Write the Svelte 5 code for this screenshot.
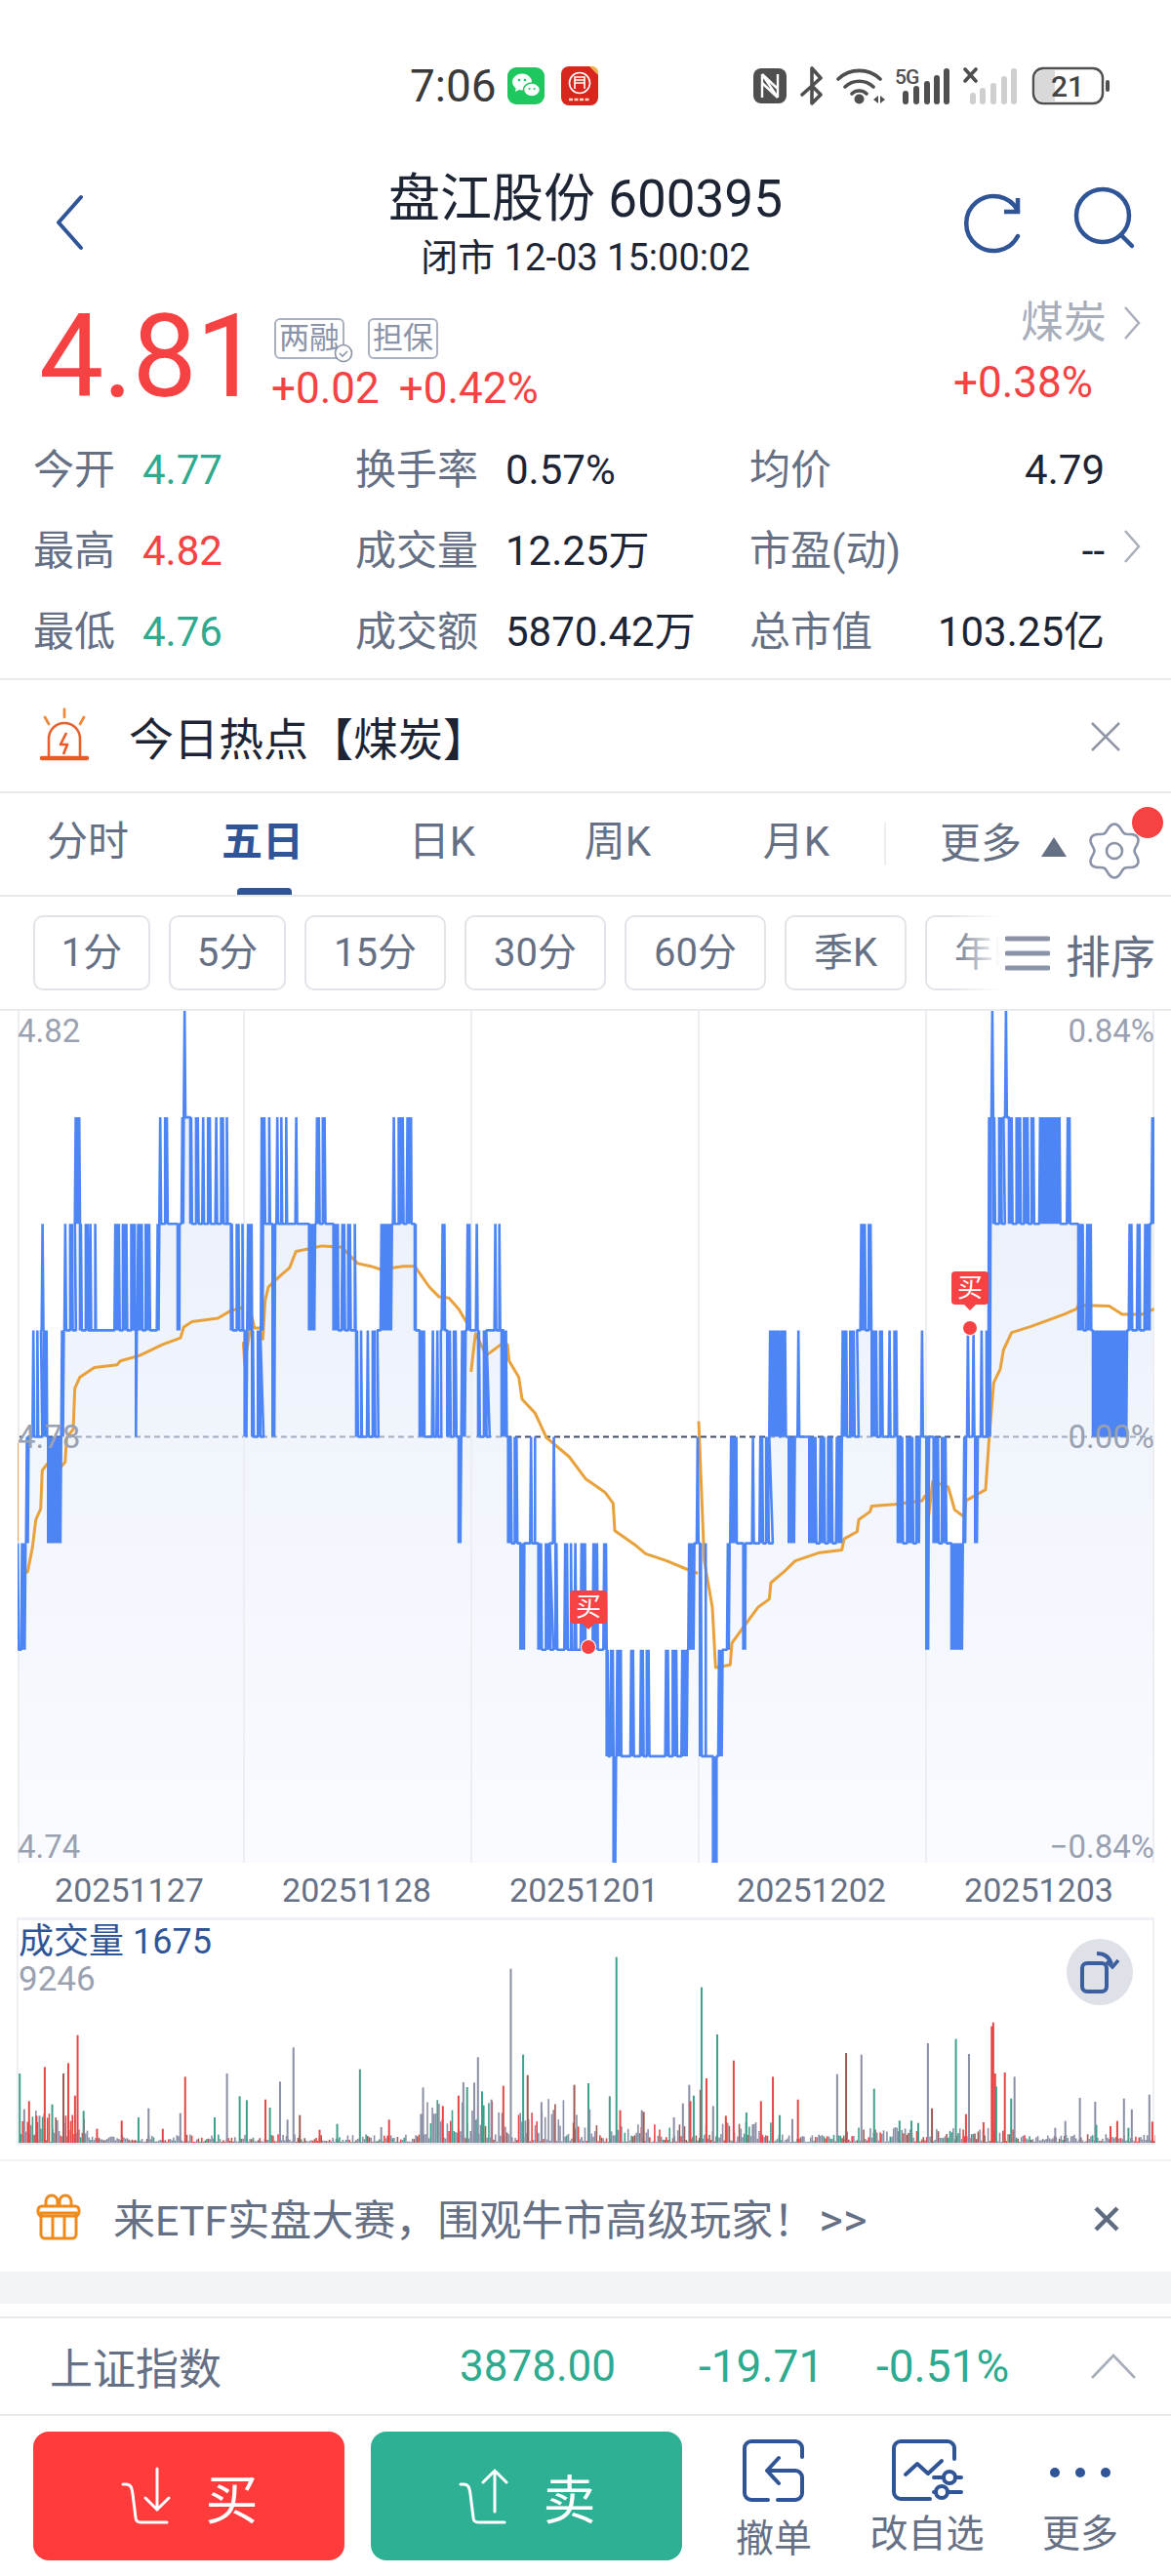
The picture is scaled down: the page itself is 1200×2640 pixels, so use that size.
<script>
	const CHART_W = 1165;
	const CHART_H = 873;
	const CHART_X = 18;
	const CHART_Y = 1036;
	const VOL_H = 230;

	const levelY = (l) => (CHART_H * (8 - l)) / 8;

	// price runs per crop: [x0, x1, lo, hi, block], x in crop units (3 = 1px)
	// block > 0 breaks the run into solid blocks with small white gaps
	const runGroups = [
		[10, [
			[22,28,2,3],[35,50,2,3],[50,58,3,4],[70,96,4,5,5],[98,104,5,6],[105,115,4,5],[118,158,3,4],[158,168,4,5],
			[168,200,5,6,7],[200,216,6,7],[216,240,5,6,6],[245,265,5,6,6],[322,385,5,6,14],[388,391,4,5],[392,442,5,6,14],
			[452,460,5,6],[460,490,6,7,7],[516,522,5,6],[528,535,6,7],[535,540,7,8],[555,585,6,7,7],[592,622,6,7,8],
			[632,670,6,7,8],[680,717,5,6,8],[722,730,4,5],[730,745,5,6],[745,770,4,5,8],[772,780,5,7],[780,800,6,7,7],
			[808,816,4,6],[820,855,6,7,5],[878,890,6,7,5],[920,940,5,6],[942,980,6,7,9],[995,1010,5,6],[1020,1065,5,6,10],
			[1065,1085,4,5,5],[1098,1130,4,5,6],[1140,1175,5,6],[1178,1200,6,7,7]
		]],
		[400, [
			[8,15,6,7],[30,42,6,7],[50,65,6,7],[75,78,5,6],[90,105,4,5],[128,135,4,5],[142,155,4,5,4],[158,168,5,6],
			[175,205,4,5,9],[210,218,3,4],[218,232,4,5],[235,245,5,6],[263,270,5,6],[270,295,4,5,8],[320,342,5,6,5],
			[342,360,4,5],[362,400,3,4,10],[400,412,2,3],[430,445,3,4,5],[455,490,2,3,12],[500,506,3,4],[508,514,2,3],
			[535,560,2,3,9],[566,572,2,3],[585,600,2,3],[622,640,2,3],[655,665,2,3],[665,672,1,2],[676,686,1,2],
			[686,694,0,1],[695,710,1,2],[738,750,1,2],[768,800,1,2,10],[845,890,1,2,12],[895,915,1,2],[916,935,2,3],
			[942,950,3,4],[952,970,1,3,6],[992,1003,0,1],[1008,1022,1,2],[1035,1045,2,3],[1045,1065,3,4],
			[1085,1092,2,3],[1112,1120,3,4],[1135,1165,3,4,10],[1165,1200,4,5]
		]],
		[790, [
			[30,48,4,5],[55,76,3,4],[82,90,4,5],[118,140,3,4],[150,195,3,4,15],[200,218,3,4],[218,265,4,5,15],[275,310,5,6,14],
			[310,345,4,5,14],[362,388,4,5,6],[390,460,3,4,18],[462,470,4,5],[478,488,2,4],[500,545,3,4,14],[555,592,2,3],
			[592,600,3,4],[603,610,4,5],[620,628,4,5],[628,636,3,4],[645,668,4,5,6],[668,676,4,7],[678,684,7,8],
			[684,715,6,7,8],[720,726,7,8],[732,810,6,7,12],[825,890,6,7],[910,920,6,7],[945,962,5,6],[970,985,5,6],
			[990,1095,4,5],[1100,1112,5,6],[1125,1135,5,6],[1148,1165,5,6],[1170,1178,6,7]
		]]
	];

	function buildPrice() {
		const runs = runGroups.flatMap(([ox, list]) =>
			list.map(([a, b, lo, hi, block]) => ({
				x0: ox + a / 3 - CHART_X,
				x1: ox + b / 3 - CHART_X,
				lo,
				hi,
				block: block ? block / 3 : 0
			}))
		);
		const pts = [];
		let prev = null;
		for (const r of runs) {
			if (prev) {
				let c = r.hi;
				if (prev.hi === r.lo) c = r.lo;
				else if (prev.lo === r.hi) c = r.hi;
				else if (prev.lo === r.lo) c = r.lo;
				pts.push([prev.x1, levelY(c)], [r.x0, levelY(c)]);
			}
			let up = false;
			let x = r.x0;
			let inBlock = 0;
			while (x <= r.x1) {
				pts.push([x, levelY(up ? r.hi : r.lo)]);
				up = !up;
				x += 0.9;
				inBlock += 0.9;
				if (r.block && inBlock >= r.block) {
					// leave a thin gap between the blocks
					pts.push([x, levelY(r.lo)]);
					x += 3.2;
					pts.push([x, levelY(r.lo)]);
					up = true;
					inBlock = 0;
				}
			}
			prev = r;
		}
		pts.push([CHART_W, levelY(prev.hi)]);
		return pts;
	}

	const toPath = (pts) => pts.map(([x, y], i) => `${i ? 'L' : 'M'}${x.toFixed(1)} ${y.toFixed(1)}`).join('');

	const pricePts = buildPrice();
	const pricePath = toPath(pricePts);
	const fillPath = `${pricePath}L${CHART_W} ${CHART_H}L${pricePts[0][0].toFixed(1)} ${CHART_H}Z`;

	// average price, one line per trading day
	const zp = (ox, list) => list.map(([x, y]) => [ox + x / 3 - CHART_X, 1030 + y / 1.782 - CHART_Y]);
	const avgLines = [
		zp(10, [[22,800],[22,980]]),
		zp(10, [[40,1040],[55,1035],[70,990],[80,940],[95,920],[100,850],[115,838],[150,848],[170,835],[175,790],[195,775],[200,700],[215,680],[260,662],[330,657],[340,650],[400,640],[470,620],[525,608],[535,588],[560,578],[640,572],[680,558],[716,553]]),
		zp(10, [[718,615],[722,655],[745,570],[752,590],[772,590],[778,610],[785,540],[795,515],[830,495],[860,480],[880,450],[920,445],[960,440],[1020,442],[1070,472],[1110,477],[1140,483],[1200,478]]).concat(
			zp(400, [[40,477],[75,477],[120,515],[150,533],[180,535],[210,555],[235,580]])
		),
		zp(400, [[248,670],[262,600],[295,640],[340,620],[360,620],[365,650],[395,680],[405,720],[445,745],[480,790],[550,825],[600,865],[660,890],[685,910],[690,960],[750,985],[785,1002],[850,1015],[910,1030],[945,1038]]),
		zp(400, [[948,760],[965,1015],[990,1100],[1000,1210],[1045,1205],[1050,1165],[1130,1100],[1165,1085],[1170,1055],[1200,1040]]).concat(
			zp(790, [[40,1035],[75,1015],[150,1000],[218,995],[225,975],[265,962],[270,940],[305,925],[310,915],[380,912],[465,905],[475,895]])
		),
		zp(790, [[480,960],[497,870],[545,880],[565,922],[595,935],[600,905],[660,885],[670,800],[685,690],[705,665],[715,630],[740,598],[800,587],[900,565],[940,555],[945,548],[1040,550],[1080,565],[1140,565],[1178,555]])
	];

	const GREEN = '#3fa08c';
	const RED = '#e84545';
	const GRAY = '#8a8fa5';
	const BROWN = '#a05a55';

	// the tall volume bars: [crop x, crop y, colour]
	const bigLeft = [
		[45,490,GREEN],[57,600,GRAY],[70,575,RED],[90,620,RED],[98,620,GRAY],[112,470,RED],[132,585,GREEN],[162,490,BROWN],[175,458,RED],
		[193,558,RED],[200,372,RED],[216,605,GREEN],[252,660,RED],[318,635,RED],[363,625,GREEN],[390,597,GRAY],[428,660,RED],[488,500,RED],
		[475,612,GRAY],[567,625,GREEN],[600,490,GRAY],[634,560,GREEN],[653,572,GREEN],[703,570,RED],[715,595,GREEN],[742,515,GRAY],
		[778,410,GRAY],[795,618,BROWN],[762,632,GRAY],[848,663,RED],[895,645,GREEN],[956,477,GREEN],[1013,655,GRAY],[1034,632,RED],
		[1125,533,GRAY],[1178,590,RED],[1220,558,RED],[1233,517,GRAY],[1243,532,GREEN],[1262,518,GRAY],[1272,440,GRAY],[1283,545,GREEN],
		[1340,528,RED],[1308,570,GRAY],[1360,168,GRAY],[1393,432,GREEN],[1405,495,BROWN],[1442,578,GRAY],[1530,525,BROWN]
	];
	const bigRight = [
		[0,520,GREEN],[3,600,GRAY],[57,560,GREEN],[75,132,GREEN],[85,603,RED],[143,603,GRAY],[148,608,BROWN],[229,625,GRAY],[253,582,GRAY],
		[270,525,GRAY],[273,575,RED],[282,558,GREEN],[300,540,BROWN],[303,225,GREEN],[316,505,RED],[334,590,GRAY],[345,370,GREEN],[368,620,RED],
		[389,450,RED],[423,610,GREEN],[462,575,RED],[494,500,RED],[512,618,GREEN],[546,630,GRAY],[561,570,RED],[666,492,GRAY],[690,427,BROWN],
		[731,432,GRAY],[765,537,GREEN],[833,635,GREEN],[865,635,GREEN],[883,642,GREEN],[909,397,GRAY],[920,597,BROWN],[984,384,GREEN],[1011,615,RED],
		[1019,430,GRAY],[1058,640,RED],[1080,345,RED],[1084,333,RED],[1089,490,RED],[1092,530,GREEN],[1115,487,RED],[1132,567,GREEN],[1141,500,GRAY],
		[1250,657,GRAY],[1277,636,GRAY],[1316,565,GRAY],[1357,577,GRAY],[1360,648,GREEN],[1398,652,RED],[1416,636,RED],[1434,567,GRAY],[1446,657,GREEN],
		[1455,600,GRAY],[1502,555,GRAY],[1510,638,RED],[1521,605,BROWN]
	];

	function buildVolume() {
		let seed = 4127;
		const rnd = () => {
			seed = (seed * 16807) % 2147483647;
			return seed / 2147483647;
		};
		const colors = [GRAY, GRAY, GRAY, GRAY, RED, GREEN, BROWN];
		const bars = [];
		// small bars follow a rough envelope of the day's activity
		for (let x = 0; x < CHART_W; x += 1.7) {
			const abs = x + 17;
			let top = 6;
			if (abs < 90) top = 26;
			else if (abs >= 424 && abs < 590) top = 34;
			else if (abs >= 590 && abs < 700) top = 14;
			else if (abs >= 720 && abs < 790) top = 16;
			else if (abs >= 860 && abs < 1040) top = 12;
			const r = rnd();
			bars.push({ x, h: 1 + r * Math.sqrt(r) * top * 1.3, w: 1.6, c: colors[Math.floor(rnd() * colors.length)] });
		}
		for (const [zx, zy, c] of bigLeft) {
			bars.push({ x: zx / 2.613 - 17, h: (703 - zy) / 3, w: 2, c });
		}
		for (const [zx, zy, c] of bigRight) {
			bars.push({ x: 600 + zx / 2.613 - 17, h: (703 - zy) / 3, w: 2, c });
		}
		return bars;
	}

	const volumeBars = buildVolume();

	const gearPath = (() => {
		const pts = [];
		for (let i = 0; i < 72; i++) {
			const a = (i * Math.PI) / 36;
			const r = 24 + 3.5 * Math.cos(6 * a);
			pts.push([30 + r * Math.sin(a), 30 - r * Math.cos(a)]);
		}
		return toPath(pts) + 'Z';
	})();

	const stats = [
		[
			{ label: '今开', value: '4.77', tone: 'down' },
			{ label: '换手率', value: '0.57%' },
			{ label: '均价', value: '4.79' }
		],
		[
			{ label: '最高', value: '4.82', tone: 'up' },
			{ label: '成交量', value: '12.25万' },
			{ label: '市盈(动)', value: '--' }
		],
		[
			{ label: '最低', value: '4.76', tone: 'down' },
			{ label: '成交额', value: '5870.42万' },
			{ label: '总市值', value: '103.25亿' }
		]
	];

	const tabs = ['分时', '五日', '日K', '周K', '月K'];
	const periods = [
		{ label: '1分', w: 120 },
		{ label: '5分', w: 120 },
		{ label: '15分', w: 145 },
		{ label: '30分', w: 145 },
		{ label: '60分', w: 145 },
		{ label: '季K', w: 125 },
		{ label: '年K', w: 125 }
	];
	const dates = ['20251127', '20251128', '20251201', '20251202', '20251203'];
	const dayLines = [232, 465, 698, 931];
</script>

<div class="page">
	<div class="status">
		<span class="time">7:06</span>
		<svg class="app" width="38" height="38" viewBox="0 0 38 38">
			<rect width="38" height="38" rx="9" fill="#1fc75f" />
			<ellipse cx="15" cy="15" rx="10" ry="8.5" fill="#fff" />
			<path d="M9 20l-1 5 6-3z" fill="#fff" />
			<ellipse cx="25" cy="23" rx="8.5" ry="7" fill="#fff" stroke="#1fc75f" stroke-width="1.5" />
			<circle cx="12" cy="13" r="1.3" fill="#1fc75f" />
			<circle cx="18" cy="13" r="1.3" fill="#1fc75f" />
			<circle cx="22.5" cy="22" r="1.1" fill="#1fc75f" />
			<circle cx="27.5" cy="22" r="1.1" fill="#1fc75f" />
		</svg>
		<svg class="app" width="38" height="40" viewBox="0 0 38 40">
			<rect width="38" height="40" rx="8" fill="#d8261c" />
			<path d="M29 0h3a6 6 0 0 1 6 6v3z" fill="#f2b34c" />
			<circle cx="19" cy="17" r="10.5" fill="none" stroke="#fff" stroke-width="1.6" />
			<path d="M14 11h10v6H14zM14 17v6M24 17v6M14 14h10" fill="none" stroke="#fff" stroke-width="1.6" />
			<path d="M8 34h22" stroke="#ffd9c2" stroke-width="2.5" stroke-dasharray="4 1.5" />
		</svg>
		<div class="sys">
			<svg width="34" height="38" viewBox="0 0 34 38">
				<rect width="34" height="36" y="1" rx="8" fill="#4f4f4f" />
				<path d="M9 7v24M25 7v24M9 7l16 24M9 16l16 15M9 7l16 15" stroke="#fff" stroke-width="2.4" fill="none" />
			</svg>
			<svg class="bt" width="24" height="40" viewBox="0 0 24 40">
				<path d="M2 29L21 12 12 2v36l9-9-8-8" fill="none" stroke="#4f4f4f" stroke-width="3.6" stroke-linejoin="round" stroke-linecap="round" />
			</svg>
			<svg class="wifi" width="50" height="40" viewBox="0 0 50 40">
				<path d="M2 13a31 31 0 0 1 43 0M9 21a21 21 0 0 1 29 0M16 28a11 11 0 0 1 15 0" fill="none" stroke="#4f4f4f" stroke-width="3.6" stroke-linecap="round" />
				<circle cx="23.5" cy="33.5" r="5" fill="#4f4f4f" />
				<path d="M38 34l5-4v8zM45 30l5 4-5 4z" fill="#4f4f4f" />
			</svg>
			<svg class="cell" width="56" height="40" viewBox="0 0 56 40">
				<text x="0" y="18" class="five">5G</text>
				<g fill="#4f4f4f">
					<rect x="8" y="25" width="6" height="14" rx="3" />
					<rect x="19" y="20" width="6" height="19" rx="3" />
					<rect x="30" y="15" width="6" height="24" rx="3" />
					<rect x="40" y="9" width="6" height="30" rx="3" />
					<rect x="50" y="2" width="6" height="37" rx="3" />
				</g>
			</svg>
			<svg class="cell2" width="56" height="40" viewBox="0 0 56 40">
				<path d="M2 3l11 12M13 3L2 15" stroke="#4f4f4f" stroke-width="3.6" stroke-linecap="round" />
				<g fill="#cfcfcf">
					<rect x="7" y="27" width="6" height="12" rx="3" />
					<rect x="17" y="22" width="6" height="17" rx="3" />
					<rect x="28" y="17" width="6" height="22" rx="3" />
					<rect x="39" y="10" width="6" height="29" rx="3" />
					<rect x="49" y="2" width="6" height="37" rx="3" />
				</g>
			</svg>
			<svg class="batt" width="82" height="40" viewBox="0 0 82 40">
				<rect x="2" y="2" width="71" height="36" rx="10" fill="none" stroke="#4f4f4f" stroke-width="2.5" />
				<path d="M4 12a8 8 0 0 1 8-8h12v32H12a8 8 0 0 1-8-8z" fill="#d9d9d9" />
				<text x="37" y="31" class="level">21</text>
				<rect x="76" y="14" width="4" height="12" rx="2" fill="#4f4f4f" />
			</svg>
		</div>
	</div>

	<header class="head">
		<svg class="back" width="34" height="60" viewBox="0 0 34 60">
			<path d="M29 4L6 30l23 26" fill="none" stroke="#2f5597" stroke-width="4" stroke-linecap="round" stroke-linejoin="round" />
		</svg>
		<div class="title">盘江股份 600395</div>
		<div class="subtitle">闭市 12-03 15:00:02</div>
		<svg class="refresh" width="66" height="66" viewBox="0 0 66 66">
			<path d="M58 47A28 28 0 1 1 58 21" fill="none" stroke="#2f5597" stroke-width="4.5" stroke-linecap="round" />
			<path d="M58 8v14H44" fill="none" stroke="#2f5597" stroke-width="4.5" />
		</svg>
		<svg class="search" width="66" height="66" viewBox="0 0 66 66">
			<circle cx="31" cy="30" r="27" fill="none" stroke="#2f5597" stroke-width="4.5" />
			<path d="M50 50l11 11" stroke="#2f5597" stroke-width="4.5" stroke-linecap="round" />
		</svg>
	</header>

	<section class="quote">
		<div class="price">4.81</div>
		<div class="quote-mid">
			<div class="badges">
				<span class="badge">两融<svg class="check" width="20" height="20" viewBox="0 0 20 20"><circle cx="10" cy="10" r="8.5" fill="#fff" stroke="#8a93a8" stroke-width="1.6" /><path d="M6 10l3 3 5-5" fill="none" stroke="#8a93a8" stroke-width="1.6" /></svg></span>
				<span class="badge">担保</span>
			</div>
			<div class="change"><span>+0.02</span><span>+0.42%</span></div>
		</div>
		<div class="quote-side">
			<div class="sector">煤炭<svg width="20" height="36" viewBox="0 0 20 36"><path d="M3 2l14 16L3 34" fill="none" stroke="#a9aebb" stroke-width="2.5" /></svg></div>
			<div class="sector-change">+0.38%</div>
		</div>
	</section>

	<section class="stats">
		{#each stats as row}
			<div class="stat-row">
				<div class="cell c1"><span class="label">{row[0].label}</span><span class="value {row[0].tone}">{row[0].value}</span></div>
				<div class="cell c2"><span class="label">{row[1].label}</span><span class="value">{row[1].value}</span></div>
				<div class="cell c3"><span class="label">{row[2].label}</span><span class="value">{row[2].value}</span></div>
			</div>
		{/each}
		<svg class="stats-more" width="20" height="36" viewBox="0 0 20 36"><path d="M3 2l14 16L3 34" fill="none" stroke="#a9aebb" stroke-width="2.5" /></svg>
	</section>

	<div class="notice">
		<svg width="52" height="58" viewBox="0 0 52 58">
			<path d="M10 50V32a16 16 0 0 1 32 0v18" fill="none" stroke="#e9602c" stroke-width="2.6" />
			<path d="M3 52h46" stroke="#ec5a28" stroke-width="4.5" stroke-linecap="round" />
			<path d="M28 26l-6 12h7l-4 10" fill="none" stroke="#ec5a28" stroke-width="2.6" stroke-linejoin="round" />
			<path d="M26 2v8M6 10l4 7M46 10l-4 7" stroke="#f08a3c" stroke-width="2.8" stroke-linecap="round" />
		</svg>
		<span class="notice-text">今日热点【煤炭】</span>
		<svg class="notice-x" width="32" height="32" viewBox="0 0 32 32"><path d="M2 2l28 28M30 2L2 30" stroke="#8f96a6" stroke-width="2.6" /></svg>
	</div>

	<nav class="tabs">
		{#each tabs as tab, i}
			<div class="tab" class:active={i === 1}>{tab}</div>
		{/each}
		<div class="tab-more">
			更多
			<span class="tri"></span>
		</div>
		<svg class="gear" width="60" height="60" viewBox="0 0 60 60">
			<path d={gearPath} fill="none" stroke="#8a93a8" stroke-width="2.6" stroke-linejoin="round" />
			<circle cx="30" cy="30" r="8" fill="none" stroke="#8a93a8" stroke-width="2.6" />
		</svg>
		<span class="dot"></span>
	</nav>

	<div class="periods">
		{#each periods as p}
			<div class="period" style="width: {p.w}px">{p.label}</div>
		{/each}
		<div class="sort">
			<svg width="46" height="40" viewBox="0 0 46 40"><path d="M2 5h42M2 20h42M2 35h42" stroke="#8a93a8" stroke-width="5" stroke-linecap="round" /></svg>
			<span>排序</span>
		</div>
	</div>

	<div class="chart">
		<svg width={CHART_W} height={CHART_H} viewBox="0 0 {CHART_W} {CHART_H}">
			<defs>
				<linearGradient id="area" x1="0" y1="0" x2="0" y2={CHART_H} gradientUnits="userSpaceOnUse">
					<stop offset="0" stop-color="#e9eef9" />
					<stop offset="1" stop-color="#f9fbff" />
				</linearGradient>
				<clipPath id="under"><path d={fillPath} /></clipPath>
			</defs>
			<line x1="0" y1={levelY(4)} x2={CHART_W} y2={levelY(4)} stroke="#3f4d66" stroke-width="2" stroke-dasharray="6 4" />
			<path d={fillPath} fill="url(#area)" />
			<line x1="0" y1={levelY(4)} x2={CHART_W} y2={levelY(4)} stroke="#a3adc0" stroke-width="2" stroke-dasharray="6 4" clip-path="url(#under)" />
			{#each dayLines as x}
				<line x1={x} y1="0" x2={x} y2={CHART_H} stroke="#eceef2" stroke-width="2" />
			{/each}
			<line x1="1" y1="0" x2="1" y2={CHART_H} stroke="#eceef2" stroke-width="2" />
			<line x1={CHART_W - 1} y1="0" x2={CHART_W - 1} y2={CHART_H} stroke="#eceef2" stroke-width="2" />
			{#each avgLines as line}
				<path d={toPath(line)} fill="none" stroke="#e9a23b" stroke-width="3" stroke-linejoin="round" />
			{/each}
			<path d={pricePath} fill="none" stroke="#4d85f5" stroke-width="2.6" stroke-linejoin="bevel" />
		</svg>
		<span class="axis tl">4.82</span>
		<span class="axis ml">4.78</span>
		<span class="axis bl">4.74</span>
		<span class="axis tr">0.84%</span>
		<span class="axis mr">0.00%</span>
		<span class="axis br">−0.84%</span>

		<div class="mark m1"><span class="flag">买</span><span class="pin"></span></div>
		<div class="mark m2"><span class="flag">买</span><span class="pin"></span></div>
	</div>

	<div class="dates">
		{#each dates as d}
			<span>{d}</span>
		{/each}
	</div>

	<div class="volume">
		<svg width={CHART_W} height={VOL_H} viewBox="0 0 {CHART_W} {VOL_H}">
			<rect x="0" y={VOL_H - 2} width={CHART_W} height="2" fill="#e6e8ee" />
			{#each volumeBars as b}
				<rect x={b.x} y={VOL_H - 2 - b.h} width={b.w} height={b.h} fill={b.c} />
			{/each}
		</svg>
		<div class="vol-label">成交量 1675</div>
		<div class="vol-max">9246</div>
		<div class="rotate">
			<svg width="42" height="44" viewBox="0 0 42 44">
				<rect x="3" y="13" width="25" height="29" rx="5" fill="none" stroke="#3c5f9f" stroke-width="4" />
				<path d="M18 3c8 0 13 4 15 11" fill="none" stroke="#3c5f9f" stroke-width="4" />
				<path d="M28 11l6 6 6-7" fill="none" stroke="#3c5f9f" stroke-width="3.5" />
			</svg>
		</div>
	</div>

	<div class="banner">
		<svg width="46" height="48" viewBox="0 0 46 48">
			<path d="M5 20h36v22a4 4 0 0 1-4 4H9a4 4 0 0 1-4-4z" fill="none" stroke="#ee8a1c" stroke-width="3" />
			<rect x="2" y="13" width="42" height="10" rx="4" fill="none" stroke="#ee8a1c" stroke-width="3" />
			<path d="M17 24v22M29 24v22" stroke="#ee8a1c" stroke-width="3" />
			<path d="M22 13V8a6 6 0 0 0-12 0v5M24 13V8a6 6 0 0 1 12 0v5" fill="none" stroke="#ee8a1c" stroke-width="3" />
		</svg>
		<span class="banner-text">来ETF实盘大赛，围观牛市高级玩家！<span class="arrows">&gt;&gt;</span></span>
		<svg class="banner-x" width="28" height="28" viewBox="0 0 28 28"><path d="M3 3l22 22M25 3L3 25" stroke="#5f6b80" stroke-width="4.5" /></svg>
	</div>

	<div class="band"></div>

	<div class="index">
		<span class="index-name">上证指数</span>
		<span class="index-val v1">3878.00</span>
		<span class="index-val v2">-19.71</span>
		<span class="index-val v3">-0.51%</span>
		<svg width="48" height="28" viewBox="0 0 48 28"><path d="M2 26L24 3l22 23" fill="none" stroke="#a9aebb" stroke-width="2.6" /></svg>
	</div>

	<footer class="bottom">
		<div class="trade buy">
			<svg width="68" height="60" viewBox="0 0 68 60">
				<path d="M3 18h3c5 0 6 3 7 10l3 24c0 3 2 5 5 5h27" fill="none" stroke="#fff" stroke-width="3" stroke-linecap="round" />
				<path d="M38 2v42M26 32l12 12 12-12" fill="none" stroke="#fff" stroke-width="3" stroke-linecap="round" />
			</svg>
			<span>买</span>
		</div>
		<div class="trade sell">
			<svg width="68" height="60" viewBox="0 0 68 60">
				<path d="M3 18h3c5 0 6 3 7 10l3 24c0 3 2 5 5 5h27" fill="none" stroke="#fff" stroke-width="3" stroke-linecap="round" />
				<path d="M38 46V4M26 16L38 4l12 12" fill="none" stroke="#fff" stroke-width="3" stroke-linecap="round" />
			</svg>
			<span>卖</span>
		</div>
		<div class="actions">
			<div class="action">
				<svg width="66" height="64" viewBox="0 0 66 64">
					<path d="M62 18V9a7 7 0 0 0-7-7H10a7 7 0 0 0-7 7v46a7 7 0 0 0 7 7h17M37 62h18a7 7 0 0 0 7-7V39a7 7 0 0 0-7-7H27" fill="none" stroke="#2f5597" stroke-width="4" stroke-linecap="round" />
					<path d="M38 19L26 32l12 13" fill="none" stroke="#2f5597" stroke-width="4" stroke-linecap="round" stroke-linejoin="round" />
				</svg>
				<span class="low">撤单</span>
			</div>
			<div class="action">
				<svg width="74" height="64" viewBox="0 0 74 64">
					<path d="M65 20V9a7 7 0 0 0-7-7H10a7 7 0 0 0-7 7v45a7 7 0 0 0 7 7h30" fill="none" stroke="#2f5597" stroke-width="4" stroke-linecap="round" />
					<path d="M15 36l12-11 11 10 14-13" fill="none" stroke="#2f5597" stroke-width="4" stroke-linecap="round" stroke-linejoin="round" />
					<path d="M44 39h28M44 54h28" stroke="#2f5597" stroke-width="4" stroke-linecap="round" />
					<circle cx="60" cy="39" r="6" fill="#fff" stroke="#2f5597" stroke-width="4" />
					<circle cx="52" cy="54" r="6" fill="#fff" stroke="#2f5597" stroke-width="4" />
				</svg>
				<span>改自选</span>
			</div>
			<div class="action">
				<svg width="66" height="64" viewBox="0 0 66 64">
					<circle cx="7" cy="34" r="5" fill="#2f5597" />
					<circle cx="33" cy="34" r="5" fill="#2f5597" />
					<circle cx="59" cy="34" r="5" fill="#2f5597" />
				</svg>
				<span>更多</span>
			</div>
		</div>
	</footer>
</div>

<style>
	:global(body) {
		margin: 0;
		background: #fff;
	}

	.page {
		width: 1200px;
		height: 2640px;
		overflow: hidden;
		position: relative;
		font-family: Roboto, 'Noto Sans CJK SC', sans-serif;
		color: #1d2535;
		background: #fff;
	}

	/* status bar */
	.status {
		height: 176px;
		display: flex;
		align-items: center;
		padding-left: 420px;
		box-sizing: border-box;
	}

	.time {
		font-size: 46px;
		color: #3a3a3a;
		width: 100px;
	}

	.app {
		margin-right: 17px;
	}

	.sys {
		position: absolute;
		left: 772px;
		top: 68px;
		display: flex;
		align-items: center;
	}

	.sys .bt {
		margin-left: 14px;
	}

	.sys .wifi {
		margin-left: 13px;
	}

	.sys .cell {
		margin-left: 10px;
	}

	.sys .cell2 {
		margin-left: 14px;
	}

	.sys .batt {
		margin-left: 14px;
	}

	.five {
		font-size: 21px;
		font-weight: 500;
		fill: #4f4f4f;
		letter-spacing: -1px;
	}

	.level {
		font-size: 30px;
		font-weight: 500;
		fill: #444;
		text-anchor: middle;
	}

	/* header */
	.head {
		position: relative;
		height: 120px;
		text-align: center;
	}

	.title {
		font-size: 53px;
		line-height: 56px;
		color: #1d2535;
	}

	.subtitle {
		font-size: 38px;
		line-height: 44px;
		margin-top: 10px;
		color: #1d2535;
	}

	.back {
		position: absolute;
		left: 54px;
		top: 22px;
	}

	.refresh {
		position: absolute;
		left: 985px;
		top: 19px;
	}

	.search {
		position: absolute;
		left: 1099px;
		top: 15px;
	}

	/* quote */
	.quote {
		height: 140px;
		display: flex;
		position: relative;
	}

	.price {
		font-size: 118px;
		line-height: 140px;
		color: #f64243;
		margin-left: 40px;
		width: 238px;
		letter-spacing: -1px;
	}

	.quote-mid {
		padding-top: 30px;
	}

	.badges {
		display: flex;
		gap: 24px;
		height: 42px;
		margin-left: 3px;
	}

	.badge {
		position: relative;
		border: 2px solid #a9b0c0;
		border-radius: 6px;
		font-size: 31px;
		line-height: 38px;
		padding: 0 3px;
		color: #8a93a8;
	}

	.check {
		position: absolute;
		right: -11px;
		bottom: -6px;
	}

	.change {
		display: flex;
		gap: 20px;
		font-size: 44px;
		line-height: 48px;
		margin-top: 6px;
		color: #f64243;
	}

	.quote-side {
		position: absolute;
		right: 30px;
		top: 10px;
		text-align: right;
	}

	.sector {
		display: flex;
		align-items: center;
		justify-content: flex-end;
		gap: 16px;
		font-size: 44px;
		line-height: 50px;
		color: #a9aebb;
	}

	.sector-change {
		font-size: 44px;
		line-height: 48px;
		margin-top: 12px;
		margin-right: 50px;
		color: #f64243;
	}

	/* stats */
	.stats {
		position: relative;
		height: 259px;
		border-bottom: 2px solid #e9eaee;
	}

	.stat-row {
		display: grid;
		grid-template-columns: 330px 404px 364px;
		padding-left: 34px;
		height: 83.2px;
		align-items: center;
		font-size: 42px;
	}

	.cell {
		display: flex;
		align-items: baseline;
	}

	.c1 .label {
		width: 112px;
	}

	.c2 .label {
		width: 154px;
	}

	.c3 {
		justify-content: space-between;
	}

	.label {
		color: #667085;
	}

	.value.up {
		color: #f64243;
	}

	.value.down {
		color: #2eaa8f;
	}

	.stats-more {
		position: absolute;
		left: 1150px;
		top: 106px;
	}

	/* notice */
	.notice {
		height: 116px;
		display: flex;
		align-items: center;
		padding-left: 40px;
		border-bottom: 2px solid #e9eaee;
		box-sizing: border-box;
		position: relative;
	}

	.notice-text {
		font-size: 46px;
		margin-left: 40px;
	}

	.notice-x {
		position: absolute;
		left: 1117px;
		top: 42px;
	}

	/* tabs */
	.tabs {
		height: 106px;
		display: grid;
		grid-template-columns: 180px 178px 190px 170px 196px auto;
		align-items: center;
		border-bottom: 2px solid #e9eaee;
		box-sizing: border-box;
		position: relative;
		font-size: 42px;
		color: #667085;
	}

	.tab {
		text-align: center;
		height: 100%;
		line-height: 100px;
		position: relative;
	}

	.tab.active {
		color: #2f5597;
		font-weight: 700;
	}

	.tab.active::after {
		content: '';
		position: absolute;
		left: 63px;
		bottom: 0;
		width: 56px;
		height: 7px;
		border-radius: 4px 4px 0 0;
		background: #2f5597;
	}

	.tab-more {
		border-left: 2px solid #eceef2;
		margin-left: -8px;
		height: 44px;
		line-height: 44px;
		padding-left: 55px;
		display: flex;
		align-items: center;
		gap: 20px;
	}

	.tri {
		width: 0;
		height: 0;
		border-left: 13px solid transparent;
		border-right: 13px solid transparent;
		border-bottom: 20px solid #667085;
		margin-top: 6px;
	}

	.gear {
		position: absolute;
		left: 1112px;
		top: 29px;
	}

	.dot {
		position: absolute;
		left: 1160px;
		top: 14px;
		width: 32px;
		height: 32px;
		border-radius: 50%;
		background: #f64243;
	}

	/* period buttons */
	.periods {
		height: 117px;
		display: flex;
		gap: 19px;
		align-items: center;
		padding-left: 34px;
		box-sizing: border-box;
		border-bottom: 2px solid #e9eaee;
		position: relative;
		overflow: hidden;
	}

	.period {
		flex: none;
		height: 77px;
		box-sizing: border-box;
		border: 2px solid #e2e4ea;
		border-radius: 10px;
		font-size: 40px;
		line-height: 73px;
		text-align: center;
		color: #667085;
	}

	.sort {
		position: absolute;
		right: 0;
		top: 0;
		bottom: 0;
		width: 225px;
		box-sizing: border-box;
		padding-left: 55px;
		display: flex;
		align-items: center;
		gap: 16px;
		font-size: 46px;
		color: #667085;
		background: linear-gradient(to right, rgba(255, 255, 255, 0), #fff 50px);
	}

	/* chart */
	.chart {
		position: relative;
		margin-left: 18px;
		width: 1165px;
		height: 873px;
		line-height: 0;
	}

	.axis {
		position: absolute;
		font-size: 33px;
		line-height: 36px;
		color: #9aa1b1;
	}

	.tl {
		left: 0;
		top: 3px;
	}

	.ml {
		left: 0;
		top: 419px;
	}

	.bl {
		left: 0;
		bottom: -2px;
	}

	.tr {
		right: 0;
		top: 3px;
	}

	.mr {
		right: 0;
		top: 419px;
	}

	.br {
		right: 0;
		bottom: -2px;
	}

	.mark {
		position: absolute;
		width: 38px;
		display: flex;
		flex-direction: column;
		align-items: center;
	}

	.m1 {
		left: 566px;
		top: 594px;
	}

	.m2 {
		left: 957px;
		top: 267px;
	}

	.flag {
		position: relative;
		width: 38px;
		height: 34px;
		border-radius: 4px;
		background: #f64243;
		color: #fff;
		font-size: 26px;
		line-height: 34px;
		text-align: center;
	}

	.flag::after {
		content: '';
		position: absolute;
		left: 13px;
		top: 34px;
		border-left: 6px solid transparent;
		border-right: 6px solid transparent;
		border-top: 6px solid #f64243;
	}

	.pin {
		width: 14px;
		height: 14px;
		border-radius: 50%;
		margin-top: 17px;
		background: #f64243;
		box-shadow: 0 0 0 1px #fff;
	}

	.dates {
		height: 56px;
		margin-left: 16px;
		display: grid;
		grid-template-columns: repeat(5, 233px);
		align-items: center;
		justify-items: center;
		font-size: 34px;
		color: #667085;
	}

	/* volume */
	.volume {
		position: relative;
		margin-left: 17px;
		width: 1166px;
		height: 233px;
		box-sizing: border-box;
		border: solid #eff0f3;
		border-width: 3px 2px 0;
		line-height: 0;
	}

	.vol-label {
		position: absolute;
		left: 0;
		top: 1px;
		font-size: 36px;
		line-height: 42px;
		color: #2f5597;
	}

	.vol-max {
		position: absolute;
		left: 0;
		top: 42px;
		font-size: 35px;
		line-height: 38px;
		color: #9aa1b1;
	}

	.rotate {
		position: absolute;
		left: 1074px;
		top: 19px;
		width: 68px;
		height: 68px;
		border-radius: 50%;
		background: #dfe1e9;
		display: flex;
		align-items: center;
		justify-content: center;
	}

	/* banner */
	.banner {
		margin-top: 15px;
		height: 115px;
		display: flex;
		align-items: center;
		padding-left: 37px;
		box-sizing: border-box;
		border-top: 2px solid #f2f3f5;
		position: relative;
	}

	.banner-text {
		font-size: 43px;
		color: #667085;
		margin-left: 33px;
	}

	.arrows {
		font-size: 47px;
		margin-left: 4px;
	}

	.banner-x {
		position: absolute;
		left: 1120px;
		top: 45px;
	}

	.band {
		height: 33px;
		background: #f3f4f6;
	}

	.index {
		margin-top: 13px;
		height: 102px;
		display: flex;
		align-items: center;
		box-sizing: border-box;
		border: solid #e9eaee;
		border-width: 2px 0;
		padding-left: 51px;
		position: relative;
		font-size: 44px;
	}

	.index-name {
		color: #667085;
	}

	.index-val {
		position: absolute;
		color: #2eaa8f;
	}

	.v1 {
		left: 471px;
	}

	.v2 {
		left: 716px;
		font-size: 46px;
	}

	.v3 {
		left: 898px;
		font-size: 46px;
	}

	.index svg {
		position: absolute;
		left: 1117px;
		top: 35px;
	}

	/* bottom bar */
	.bottom {
		display: flex;
		gap: 27px;
		padding: 16px 0 0 34px;
	}

	.trade {
		width: 319px;
		height: 132px;
		border-radius: 16px;
		display: flex;
		align-items: center;
		justify-content: center;
		gap: 20px;
		font-size: 54px;
		color: #fff;
	}

	.buy {
		background: #ff3b3b;
	}

	.sell {
		background: #2eb094;
	}

	.actions {
		display: flex;
		margin-left: 11px;
		gap: 45px;
	}

	.action {
		display: flex;
		flex-direction: column;
		align-items: center;
		width: 112px;
		font-size: 39px;
		line-height: 46px;
		white-space: nowrap;
		color: #667085;
	}

	.action svg {
		margin-top: 8px;
		margin-bottom: 10px;
		height: 64px;
		flex: none;
	}

	.low {
		margin-top: 5px;
	}
</style>
